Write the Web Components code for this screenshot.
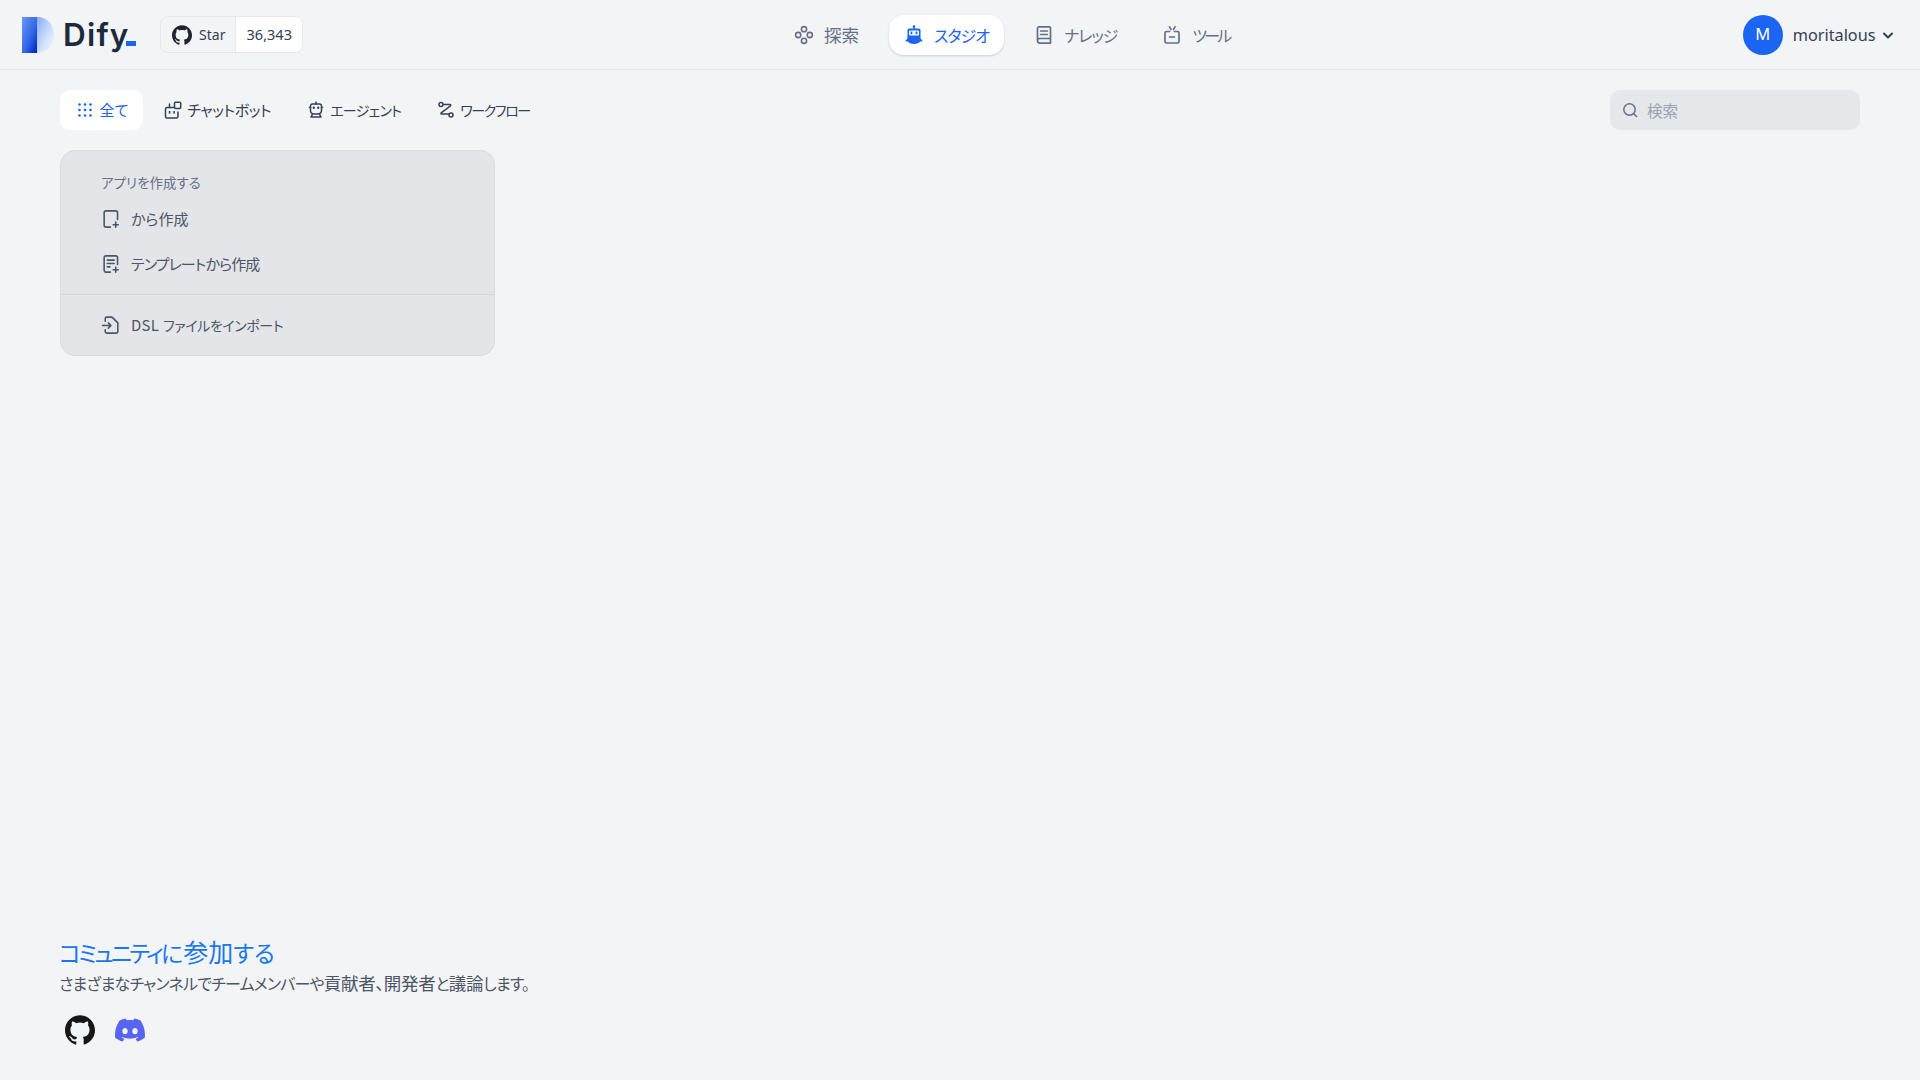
<!DOCTYPE html>
<html lang="ja"><head><meta charset="utf-8"><title>Dify</title>
<style>
html,body{margin:0;height:100%}
body{background:#f3f4f6;font-family:"Noto Sans","Noto Sans CJK JP",sans-serif;color:#344054;overflow:hidden}
</style></head><body>
<dify-app></dify-app>
<script>
const ICONS={
explore:'<g fill="none" stroke="currentColor" stroke-width="1.6"><circle cx="10" cy="4.2" r="2.6"/><circle cx="10" cy="15.8" r="2.6"/><circle cx="4.2" cy="10" r="2.6"/><circle cx="15.8" cy="10" r="2.6"/></g>',
robot:'<g fill="currentColor"><circle cx="10" cy="1.6" r="1.3"/><rect x="9.3" y="1.6" width="1.4" height="2.400"/><path d="M5.300 3.500h9.400c1 0 1.800.8 1.800 1.800v6.200h-13V5.300c0-1 .8-1.800 1.800-1.800z"/><path d="M3.500 11h13v2.300l1.800 2.100c.4.5.1 1.100-.5 1.100h-1.600c-1.100 1.500-3.100 2.500-6.200 2.500s-5.100-1-6.200-2.500H2.200c-.6 0-.9-.6-.5-1.100l1.800-2.100z"/></g><rect x="5" y="5.500" width="10" height="5" rx="1.200" fill="#fff"/><g fill="currentColor"><rect x="6.600" y="6.500" width="1.800" height="2.800" rx=".6"/><rect x="11.600" y="6.500" width="1.800" height="2.800" rx=".6"/></g>',
book:'<g fill="none" stroke="currentColor" stroke-width="1.700" stroke-linejoin="round" stroke-linecap="round"><path d="M3.500 15.800V3.500c0-.9.7-1.600 1.600-1.600h10.400a1 1 0 0 1 1 1v15.200H5.800a2.300 2.300 0 0 1-2.300-2.300c0-1.300 1-2.300 2.300-2.300h10.700"/><path d="M6.700 6h6.600M6.700 9.500h6.600"/></g>',
tool:'<g fill="none" stroke="currentColor" stroke-width="1.700" stroke-linecap="round" stroke-linejoin="round"><path d="M7.500 6.500H4.500A1.500 1.500 0 0 0 3 8V16.500A1.500 1.500 0 0 0 4.500 18h11a1.500 1.500 0 0 0 1.500-1.500V8a1.500 1.500 0 0 0-1.500-1.500h-3"/><path d="M7.500 1.800 9 4.500M13 1.800 11.500 4.500M7.500 12h5"/></g>',
grid:'<g fill="currentColor"><circle cx="3.500" cy="3.500" r="1.300"/><circle cx="9" cy="3.500" r="1.300"/><circle cx="14.500" cy="3.500" r="1.300"/><circle cx="3.500" cy="9" r="1.300"/><circle cx="9" cy="9" r="1.300"/><circle cx="14.500" cy="9" r="1.300"/><circle cx="3.500" cy="14.500" r="1.300"/><circle cx="9" cy="14.500" r="1.300"/><circle cx="14.500" cy="14.500" r="1.300"/></g>',
chat:'<g fill="none" stroke="currentColor" stroke-width="1.500" stroke-linejoin="round" stroke-linecap="round"><path d="M9.500 6.500H3a1.500 1.500 0 0 0-1.500 1.500v7.500A1.500 1.500 0 0 0 3 17h9.500a1.500 1.500 0 0 0 1.500-1.500V11"/><path d="M5.500 3v3.500"/><rect x="10.500" y="1.300" width="6.200" height="6.200" rx="1"/></g><g fill="currentColor"><rect x="4.800" y="10" width="1.600" height="2.600"/><rect x="9.300" y="10" width="1.600" height="2.600"/></g>',
agent:'<g fill="none" stroke="currentColor" stroke-width="1.500" stroke-linejoin="round" stroke-linecap="round"><path d="M5.500 3h7A2 2 0 0 1 14.500 5v4.500A3.500 3.500 0 0 1 11 13H7A3.500 3.500 0 0 1 3.500 9.500V5A2 2 0 0 1 5.500 3z"/><path d="M3.500 6.500h-1M15.500 6.500h-1M9 1v2M5.500 13.200 4 16h10l-1.500-2.800"/></g><g fill="currentColor"><rect x="5.800" y="5.500" width="2" height="2.500" rx=".8"/><rect x="10.200" y="5.500" width="2" height="2.500" rx=".8"/></g>',
flow:'<g fill="none" stroke="currentColor" stroke-width="1.500" stroke-linejoin="round" stroke-linecap="round"><circle cx="4" cy="3.500" r="2"/><circle cx="14" cy="14" r="2"/><path d="M6.500 3.500h6.500c.7 0 1 .8.500 1.300L4.200 11.800c-.5.500-.2 1.200.5 1.200h6.800"/></g>',
chev:'<path fill="none" stroke="currentColor" stroke-width="2" stroke-linecap="round" stroke-linejoin="round" d="M4 6.500 8 10.500 12 6.500"/>',
search:'<g fill="none" stroke="currentColor" stroke-width="1.500" stroke-linecap="round"><circle cx="7.500" cy="7.500" r="5.700"/><path d="M11.800 11.800 14.500 14.500"/></g>',
filePlus:'<g fill="none" stroke="currentColor" stroke-width="1.500" stroke-linecap="round" stroke-linejoin="round"><path d="M9 17.200H4.500a1.500 1.500 0 0 1-1.500-1.500V3.300a1.500 1.500 0 0 1 1.500-1.500h9.700a1.500 1.500 0 0 1 1.500 1.500V10"/><path d="M14 12.500v4.800M11.600 14.900h4.800"/></g>',
filePlusText:'<g fill="none" stroke="currentColor" stroke-width="1.500" stroke-linecap="round" stroke-linejoin="round"><path d="M9 17.200H4.500a1.500 1.500 0 0 1-1.500-1.500V3.300a1.500 1.500 0 0 1 1.500-1.500h9.700a1.500 1.500 0 0 1 1.500 1.500V10"/><path d="M6 5.800h6.500M6 9h6.500M6 12.200h2.500M14 12.500v4.800M11.600 14.900h4.800"/></g>',
fileImport:'<g fill="none" stroke="currentColor" stroke-width="1.500" stroke-linecap="round" stroke-linejoin="round"><path d="M4 6V3.500A1.500 1.500 0 0 1 5.500 2H10.500L16 7.500V15.700a1.500 1.500 0 0 1-1.500 1.500H5.500A1.500 1.500 0 0 1 4 15.700V14"/><path d="M1.500 10H9.500M7 7.500 9.500 10 7 12.500"/></g>',
github:'<path fill="currentColor" d="M12 .297c-6.630 0-12 5.373-12 12 0 5.303 3.438 9.800 8.205 11.385.6.113.82-.258.82-.577 0-.285-.01-1.040-.015-2.040-3.338.724-4.042-1.610-4.042-1.610C4.422 18.070 3.633 17.700 3.633 17.700c-1.087-.744.084-.729.084-.729 1.205.084 1.838 1.236 1.838 1.236 1.070 1.835 2.809 1.305 3.495.998.108-.776.417-1.305.76-1.605-2.665-.3-5.466-1.332-5.466-5.930 0-1.310.465-2.380 1.235-3.220-.135-.303-.54-1.523.105-3.176 0 0 1.005-.322 3.300 1.230.96-.267 1.980-.399 3-.405 1.020.006 2.040.138 3 .405 2.280-1.552 3.285-1.230 3.285-1.230.645 1.653.24 2.873.12 3.176.765.84 1.230 1.910 1.230 3.220 0 4.610-2.805 5.625-5.475 5.920.42.36.81 1.096.81 2.220 0 1.606-.015 2.896-.015 3.286 0 .315.21.69.825.57C20.565 22.092 24 17.592 24 12.297c0-6.627-5.373-12-12-12"/>',
discord:'<path fill="currentColor" d="M20.317 4.3698a19.7913 19.7913 0 00-4.8851-1.5152.0741.0741 0 00-.0785.0371c-.211.3753-.4447.8648-.6083 1.2495-1.8447-.2762-3.68-.2762-5.4868 0-.1636-.3933-.4058-.8742-.6177-1.2495a.077.077 0 00-.0785-.037 19.7363 19.7363 0 00-4.8852 1.515.0699.0699 0 00-.0321.0277C.5334 9.0458-.319 13.5799.0992 18.0578a.0824.0824 0 00.0312.0561c2.0528 1.5076 4.0413 2.4228 5.9929 3.0294a.0777.0777 0 00.0842-.0276c.4616-.6304.8731-1.2952 1.226-1.9942a.076.076 0 00-.0416-.1057c-.6528-.2476-1.2743-.5495-1.8722-.8923a.077.077 0 01-.0076-.1277c.1258-.0943.2517-.1923.3718-.2914a.0743.0743 0 01.0776-.0105c3.9278 1.7933 8.18 1.7933 12.0614 0a.0739.0739 0 01.0785.0095c.1202.099.246.1981.3728.2924a.077.077 0 01-.0066.1276 12.2986 12.2986 0 01-1.873.8914.0766.0766 0 00-.0407.1067c.3604.698.7719 1.3628 1.225 1.9932a.076.076 0 00.0842.0286c1.961-.6067 3.9495-1.5219 6.0023-3.0294a.077.077 0 00.0313-.0552c.5004-5.177-.8382-9.6739-3.5485-13.6604a.061.061 0 00-.0312-.0286zM8.02 15.3312c-1.1825 0-2.1569-1.0857-2.1569-2.419 0-1.3332.9555-2.4189 2.157-2.4189 1.2108 0 2.1757 1.0952 2.1568 2.419 0 1.3332-.9555 2.4189-2.1569 2.4189zm7.9748 0c-1.1825 0-2.1569-1.0857-2.1569-2.419 0-1.3332.9554-2.4189 2.1569-2.4189 1.2108 0 2.1757 1.0952 2.1568 2.419 0 1.3332-.946 2.4189-2.1568 2.4189Z"/>'
};
const VB={explore:20,robot:20,book:20,tool:20,grid:18,chat:18,agent:18,flow:18,chev:16,search:16,filePlus:19,filePlusText:19,fileImport:19,github:24,discord:24};
class AppIcon extends HTMLElement{
  connectedCallback(){
    const n=this.getAttribute('name'),s=this.getAttribute('size')||20,v=VB[n];
    this.attachShadow({mode:'open'}).innerHTML=`<style>:host{display:inline-flex;flex:none;width:${s}px;height:${s}px}svg{display:block;width:100%;height:100%}</style><svg viewBox="0 0 ${v} ${v}" xmlns="http://www.w3.org/2000/svg">${ICONS[n]}</svg>`;
  }
}
class DifyLogo extends HTMLElement{
  constructor(){super();this.attachShadow({mode:'open'}).innerHTML=`<style>
  :host{display:flex;align-items:center;flex:none;gap:9px}
  svg{display:block;width:32px;height:36px}
  .w{font:600 31.500px/36px Inter,sans-serif;color:#1c2a3f;letter-spacing:1.200px;display:flex;align-items:baseline;margin-top:1px}
  .u{display:inline-block;width:10px;height:5px;background:#1c64f2;margin-left:-4px}
  </style>
  <svg viewBox="0 0 32 36" xmlns="http://www.w3.org/2000/svg"><defs>
  <linearGradient id="a" x1="0" y1="0" x2="1" y2="1"><stop offset="0" stop-color="#6b9af3"/><stop offset=".55" stop-color="#3468ea"/><stop offset="1" stop-color="#0022bb"/></linearGradient>
  <linearGradient id="b" x1="0" y1="0" x2=".9" y2="1"><stop offset="0" stop-color="#86aaf6"/><stop offset=".6" stop-color="#cfe0ff"/><stop offset="1" stop-color="#f3f6ff"/></linearGradient></defs>
  <path fill="url(#b)" d="M15 0h0c9.500 0 17 7.500 17 17.500S24.500 36 15 36z"/>
  <path fill="url(#a)" d="M0 0h15v36H0z"/></svg>
  <div class="w">Dify<span class="u"></span></div>`;}
}
class GithubBadge extends HTMLElement{
  constructor(){super();this.attachShadow({mode:'open'}).innerHTML=`<style>
  :host{display:flex;flex:none;height:35px;margin-left:24px;border:1px solid #e5e7eb;border-radius:7.500px;overflow:hidden;box-sizing:content-box;font:400 14px/35px "Noto Sans",sans-serif;color:#344054}
  .l{display:flex;align-items:center;gap:7.500px;padding:0 10px 0 11px;width:53px;border-right:1px solid #e5e7eb}
  .r{display:flex;align-items:center;padding:0 10px 0 11px;background:#fff;font-size:14.500px}
  app-icon{color:#1c2433}
  </style><div class="l"><app-icon name="github" size="20"></app-icon>Star</div><div class="r">36,343</div>`;}
}
class NavItem extends HTMLElement{
  constructor(){super();this.attachShadow({mode:'open'}).innerHTML=`<style>
  :host{display:flex;align-items:center;gap:10px;height:40px;padding:0 15px;border-radius:15px;color:#667085;font:400 17.500px/24px "Noto Sans CJK JP",sans-serif;font-feature-settings:"palt";cursor:pointer}
  :host([active]){background:#fff;color:#1c64f2;box-shadow:0 1px 3px rgba(16,24,40,.1),0 1px 2px rgba(16,24,40,.06)}
  </style><slot name="icon"></slot><slot></slot>`;}
}
class TabItem extends HTMLElement{
  constructor(){super();this.attachShadow({mode:'open'}).innerHTML=`<style>
  :host{display:flex;align-items:center;gap:5px;height:40px;padding:0 15px;border-radius:10px;color:#344054;font:400 15px/20px "Noto Sans CJK JP",sans-serif;font-feature-settings:"palt";cursor:pointer}
  :host([active]){background:#fff;color:#1c64f2;gap:5.500px;padding:0 15px 0 16px}
  </style><slot name="icon"></slot><slot></slot>`;}
}
class SearchBox extends HTMLElement{
  constructor(){super();this.attachShadow({mode:'open'}).innerHTML=`<style>
  :host{display:flex;align-items:center;gap:9px;box-sizing:border-box;width:250px;height:40px;padding:0 12px;border-radius:10px;background:#e5e7eb;color:#98a2b3;font:400 15.600px/20px "Noto Sans CJK JP",sans-serif;flex:none}
  app-icon{color:#667085}
  </style><app-icon name="search" size="16"></app-icon><span>検索</span>`;}
}
class CreateItem extends HTMLElement{
  constructor(){super();this.attachShadow({mode:'open'}).innerHTML=`<style>
  :host{display:flex;align-items:center;gap:10px;height:45px;padding:0 10px;margin:0 30px;color:#4b5565;font:400 15px/20px "Noto Sans CJK JP",sans-serif;font-feature-settings:"palt";cursor:pointer}
  </style><slot name="icon"></slot><slot></slot>`;}
}
class CreateCard extends HTMLElement{
  constructor(){super();this.attachShadow({mode:'open'}).innerHTML=`<style>
  :host{display:block;box-sizing:border-box;width:435px;height:206px;margin-top:20px;background:#e4e5e9;border:1px solid #d9dbdf;border-radius:15px}
  .t{font:400 13.500px/17px "Noto Sans CJK JP",sans-serif;font-feature-settings:"palt";color:#667085;margin:23px 0 5.500px 40px;height:17px}
  .top{height:143px;display:flex;flex-direction:column}
  hr{border:0;border-top:1px solid #d5d7dc;margin:0}
  .b{padding-top:7.500px}
  </style><div class="top"><div class="t">アプリを作成する</div><slot name="top"></slot></div><hr><div class="b"><slot name="bottom"></slot></div>`;}
}
class CommunityFooter extends HTMLElement{
  constructor(){super();this.attachShadow({mode:'open'}).innerHTML=`<style>
  :host{display:block;margin-top:auto;padding:0 60px 35px}
  h2{margin:0 0 0 -1px;font:400 23px/34px "Noto Sans CJK JP",sans-serif;font-feature-settings:"palt";color:#1a77ee;letter-spacing:-2.800px}
  h2 b{font-weight:400;font-size:25px;letter-spacing:0;margin-left:3px}
  h2 i{font-style:normal;letter-spacing:0}
  p{margin:1px 0 0 -1px;font:400 16px/26px "Noto Sans CJK JP",sans-serif;font-feature-settings:"palt";color:#4b5565;letter-spacing:-.800px}
  p b{font-weight:400;font-size:17.500px;letter-spacing:-.300px}
  .i{display:flex;gap:20px;margin:19px 0 0 5px;align-items:center}
  .gh{color:#181717}.dc{color:#5865f2}
  </style><h2>コミュニティに<b>参加</b><i>する</i></h2><p>さまざまなチャンネルでチームメンバーや<b>貢献者、開発者</b>と<b>議論</b>します。</p>
  <div class="i"><app-icon class="gh" name="github" size="30"></app-icon><app-icon class="dc" name="discord" size="30"></app-icon></div>`;}
}
class UserMenu extends HTMLElement{
  constructor(){super();this.attachShadow({mode:'open'}).innerHTML=`<style>
  :host{display:flex;align-items:center;flex:none;margin-left:auto;margin-right:24.500px;color:#344054;font:400 16.250px/24px "Noto Sans",sans-serif}
  .a{width:40px;height:40px;border-radius:50%;background:#1c64f2;color:#fff;display:flex;align-items:center;justify-content:center;font:400 16.500px/1 "Noto Sans",sans-serif;margin-right:10px}
  app-icon{margin-left:4px;color:#344054}
  </style><div class="a">M</div>moritalous<app-icon name="chev" size="16"></app-icon>`;}
}
class DifyHeader extends HTMLElement{
  constructor(){super();this.attachShadow({mode:'open'}).innerHTML=`<style>
  :host{display:flex;align-items:center;box-sizing:border-box;height:70px;padding-left:22px;border-bottom:1px solid #e5e7eb;flex:none}
  nav{display:flex;gap:15px;margin-left:476px}
  </style><dify-logo></dify-logo><github-badge></github-badge>
  <nav>
  <nav-item><app-icon slot="icon" name="explore" size="20"></app-icon>探索</nav-item>
  <nav-item active style="font-size:16px;letter-spacing:-.900px"><app-icon slot="icon" name="robot" size="20"></app-icon>スタジオ</nav-item>
  <nav-item style="font-size:16px;letter-spacing:-1.100px"><app-icon slot="icon" name="book" size="20"></app-icon>ナレッジ</nav-item>
  <nav-item style="font-size:16px;letter-spacing:-2.700px"><app-icon slot="icon" name="tool" size="20"></app-icon>ツール</nav-item>
  </nav><user-menu></user-menu>`;}
}
class DifyApp extends HTMLElement{
  constructor(){super();this.attachShadow({mode:'open'}).innerHTML=`<style>
  :host{display:flex;flex-direction:column;height:1080px}
  main{padding:20px 60px 0}
  .bar{display:flex;align-items:center;justify-content:space-between}
  .tabs{display:flex;gap:6px}
  </style><dify-header></dify-header>
  <main><div class="bar"><div class="tabs">
  <tab-item active><app-icon slot="icon" name="grid" size="18"></app-icon>全て</tab-item>
  <tab-item style="letter-spacing:-.450px"><app-icon slot="icon" name="chat" size="18"></app-icon>チャットボット</tab-item>
  <tab-item style="font-size:14px;letter-spacing:-.700px"><app-icon slot="icon" name="agent" size="18"></app-icon>エージェント</tab-item>
  <tab-item style="font-size:14px;letter-spacing:-1.400px"><app-icon slot="icon" name="flow" size="18"></app-icon>ワークフロー</tab-item>
  </div><search-box></search-box></div>
  <create-card>
  <create-item slot="top"><app-icon slot="icon" name="filePlus" size="20"></app-icon>から作成</create-item>
  <create-item slot="top" style="letter-spacing:-.900px"><app-icon slot="icon" name="filePlusText" size="20"></app-icon>テンプレートから作成</create-item>
  <create-item slot="bottom"><app-icon slot="icon" name="fileImport" size="20"></app-icon><span><span style="letter-spacing:.300px">DSL </span><span style="font-size:14px;letter-spacing:-.400px">ファイルをインポート</span></span></create-item>
  </create-card></main>
  <community-footer></community-footer>`;}
}
customElements.define('app-icon',AppIcon);
customElements.define('dify-logo',DifyLogo);
customElements.define('github-badge',GithubBadge);
customElements.define('nav-item',NavItem);
customElements.define('tab-item',TabItem);
customElements.define('search-box',SearchBox);
customElements.define('create-item',CreateItem);
customElements.define('create-card',CreateCard);
customElements.define('community-footer',CommunityFooter);
customElements.define('user-menu',UserMenu);
customElements.define('dify-header',DifyHeader);
customElements.define('dify-app',DifyApp);
</script>
</body></html>
